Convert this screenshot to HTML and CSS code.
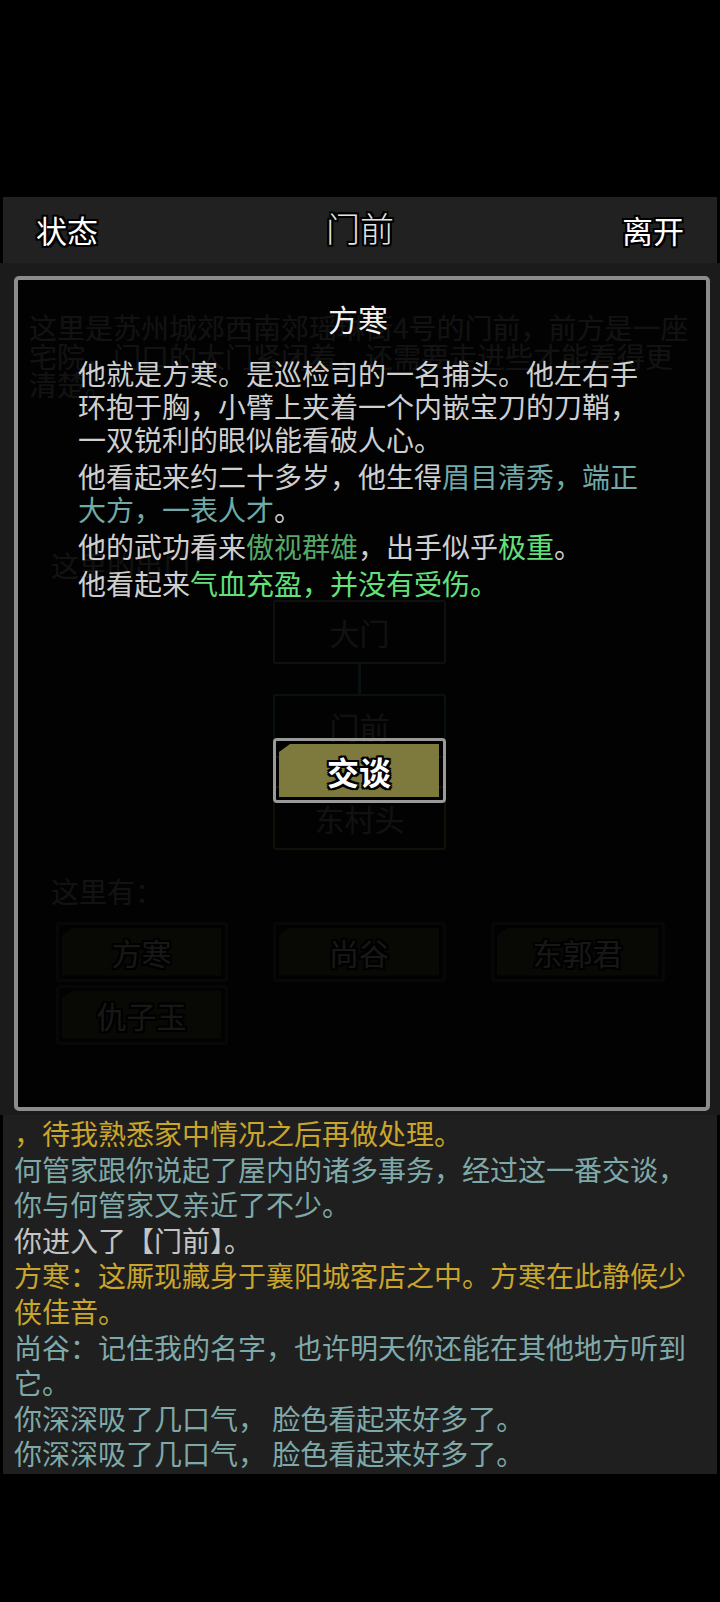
FILE: index.html
```html
<!DOCTYPE html>
<html lang="zh-CN">

<head>
    <meta charset="UTF-8">
    <meta name="viewport" content="width=device-width, initial-scale=1.0">
    <title>门前</title>
    <link rel="stylesheet" href="styles.css">
</head>

<body>
    <div class="status-space"></div>

    <div class="header">
        <span class="head-btn">状态</span>
        <span class="head-title">门前</span>
        <span class="head-btn">离开</span>
    </div>

    <div class="main">
        <!-- 房间页面（被弹窗遮住） -->
        <div class="room">
            <div class="desc">
                <span>这里是苏州城郊西南郊瑶琳街4号的门前，前方是一座</span>
                <span>宅院，门口的大门紧闭着，还需要走进些才能看得更</span>
                <span>清楚。</span>
            </div>

            <div class="label exit-label">这里的出口：</div>

            <div class="map">
                <div class="map-box">大门</div>
                <div class="map-line"></div>
                <div class="map-box here">门前</div>
                <div class="map-line short"></div>
                <div class="map-box road">东村头</div>
            </div>

            <div class="label npc-label">这里有：</div>

            <div class="npc-grid">
                <div class="btn"><span class="btn-fill">方寒</span></div>
                <div class="btn"><span class="btn-fill">尚谷</span></div>
                <div class="btn"><span class="btn-fill">东郭君</span></div>
                <div class="btn"><span class="btn-fill">仇子玉</span></div>
            </div>
        </div>

        <!-- 人物弹窗 -->
        <div class="modal">
            <div class="modal-title">方寒</div>
            <div class="modal-text">
                <p>他就是方寒。是巡检司的一名捕头。他左右手环抱于胸，小臂上夹着一个内嵌宝刀的刀鞘，一双锐利的眼似能看破人心。</p>
                <p>他看起来约二十多岁，他生得<span class="teal">眉目清秀，端正大方，一表人才</span>。</p>
                <p>他的武功看来<span class="green-dark">傲视群雄</span>，出手似乎<span class="green">极重</span>。</p>
                <p>他看起来<span class="green">气血充盈，并没有受伤。</span></p>
            </div>
            <div class="btn talk"><span class="btn-fill">交谈</span></div>
        </div>
    </div>

    <div class="log">
        <p class="yellow">，待我熟悉家中情况之后再做处理。</p>
        <p class="cyan">何管家跟你说起了屋内的诸多事务，经过这一番交谈，你与何管家又亲近了不少。</p>
        <p class="gray">你进入了【门前】。</p>
        <p class="yellow">方寒：这厮现藏身于襄阳城客店之中。方寒在此静候少侠佳音。</p>
        <p class="cyan">尚谷：记住我的名字，也许明天你还能在其他地方听到它。</p>
        <p class="cyan">你深深吸了几口气， 脸色看起来好多了。</p>
        <p class="cyan">你深深吸了几口气， 脸色看起来好多了。</p>
    </div>
</body>

</html>
```

FILE: styles.css
```css
* {
    box-sizing: border-box;
}

body {
    margin: 0;
    width: 720px;
    height: 1602px;
    background-color: #000;
    font-family: 'Noto Sans CJK SC', 'Noto Sans', sans-serif;
    overflow: hidden;
}

p {
    margin: 0;
}

.status-space {
    height: 197px;
}

/* 顶部栏 */
.header {
    height: 66px;
    margin: 0 3px;
    padding: 0 33px;
    background-color: #212121;
    display: flex;
    align-items: center;
    justify-content: space-between;
}

.head-btn,
.head-title {
    color: #fff;
    font-size: 31px;
    line-height: 36px;
    text-shadow: -2px 0 #000, 2px 0 #000, 0 -2px #000, 0 2px #000,
        -2px -2px #000, 2px 2px #000, -2px 2px #000, 2px -2px #000;
}

.head-title {
    font-size: 34px;
    font-weight: 300;
    color: #e4e4e4;
    padding-bottom: 4px;
}

/* 主区域 */
.main {
    position: relative;
    height: 852px;
    background-color: #1b1b1b;
}

.room {
    padding: 50px 0 0 29px;
    color: #c8c8c8;
}

.desc {
    font-size: 28px;
    line-height: 28.5px;
}

.desc span {
    display: block;
    white-space: nowrap;
}

.label {
    font-size: 28px;
    line-height: 36px;
    padding-left: 22px;
}

.exit-label {
    margin-top: 148px;
}

.map {
    margin: 17px 0 0 244px;
    width: 173px;
    display: flex;
    flex-direction: column;
    align-items: center;
}

.map-box {
    width: 173px;
    height: 64px;
    border: 2px solid #aaa;
    border-radius: 3px;
    display: flex;
    align-items: center;
    justify-content: center;
    font-size: 30px;
    color: #bbb;
}

.map-box.here {
    border-color: #5fb4c4;
}

.map-box.road {
    border-color: #b4ae5a;
}

.map-line {
    width: 3px;
    height: 30px;
    background-color: #5fb4c4;
}

.map-line.short {
    height: 28px;
    background-color: #999;
}

.npc-label {
    margin-top: 23px;
}

.npc-grid {
    margin: 13px 0 0 27px;
    display: grid;
    grid-template-columns: 172px 173px 174px;
    column-gap: 45px;
    row-gap: 3px;
}

/* 按钮 */
.btn {
    height: 60px;
    border: 3px solid #9a9a9a;
    border-radius: 4px;
    padding: 3px 4px 3px 3px;
    display: flex;
}

.btn-fill {
    flex: 1;
    background-color: #7e7a3d;
    clip-path: polygon(11px 0, 100% 0, 100% 100%, 0 100%, 0 8px);
    display: flex;
    align-items: center;
    justify-content: center;
    color: #fff;
    font-size: 30px;
    font-weight: 500;
    text-shadow: -2px 0 #000, 2px 0 #000, 0 -2px #000, 0 2px #000,
        -2px -2px #000, 2px 2px #000, -2px 2px #000, 2px -2px #000;
}

.npc-grid .btn {
    border-color: #555;
}

.npc-grid .btn-fill {
    background-color: #5e5b2e;
    font-weight: 400;
}

/* 弹窗 */
.modal {
    position: absolute;
    top: 13px;
    left: 14px;
    width: 696px;
    height: 835px;
    border: 4px solid #8c8c8c;
    border-radius: 5px;
    background-color: rgba(0, 0, 0, 0.91);
    padding-top: 20px;
}

.modal-title {
    text-align: center;
    color: #f2f2f2;
    font-size: 30px;
    line-height: 36px;
    margin-left: -8px;
}

.modal-text {
    margin: 21px 0 0 60px;
    width: 566px;
    color: #cfcfcf;
    font-size: 28px;
    line-height: 33px;
}

.modal-text p + p {
    margin-top: 4px;
}

.teal {
    color: #71a9a9;
}

.green-dark {
    color: #55a968;
}

.green {
    color: #63e07c;
}

.btn.talk {
    width: 173px;
    height: 65px;
    margin: 138px 0 0 255px;
}

.talk .btn-fill {
    font-size: 32px;
    font-weight: 700;
}

/* 日志 */
.log {
    height: 359px;
    margin: 0 3px;
    padding: 1px 20px 0 11px;
    background-color: #1f1f1f;
    font-size: 28px;
    line-height: 35.6px;
}

.yellow {
    color: #c9a52c;
}

.cyan {
    color: #7fa9a9;
}

.gray {
    color: #c4c4c4;
}
```
